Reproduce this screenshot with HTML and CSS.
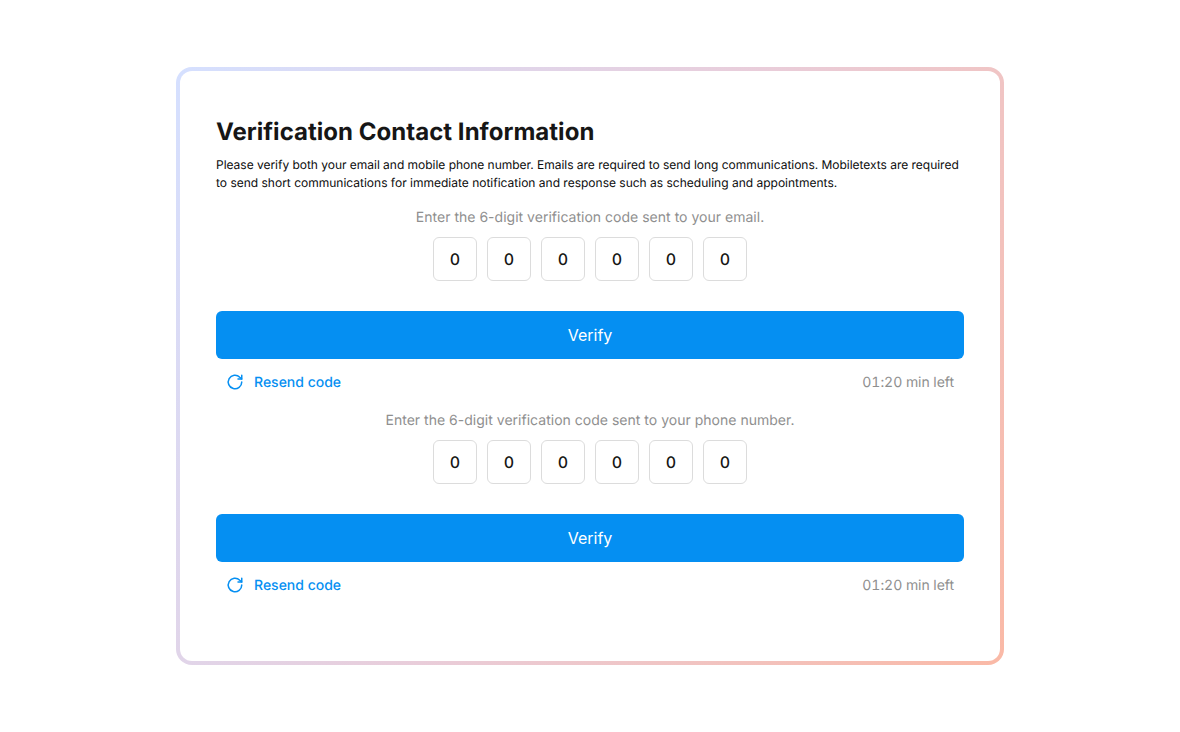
FILE: index.html
```html
<!DOCTYPE html>
<html lang="en">
<head>
<meta charset="utf-8">
<title>Verification Contact Information</title>
<link rel="stylesheet" href="styles.css">
</head>
<body>
<main class="card">
  <h1 class="title">Verification Contact Information</h1>
  <p class="intro">Please verify both your email and mobile phone number. Emails are required to send long communications. Mobiletexts are required to send short communications for immediate notification and response such as scheduling and appointments.</p>
  <section class="block">
    <p class="label">Enter the 6-digit verification code sent to your email.</p>
    <div class="digits"><span class="digit">0</span><span class="digit">0</span><span class="digit">0</span><span class="digit">0</span><span class="digit">0</span><span class="digit">0</span></div>
    <button class="verify" type="button">Verify</button>
    <div class="meta">
      <a class="resend" href="#"><svg class="icon" viewBox="0 0 24 24" fill="none" stroke="currentColor" stroke-linecap="round" stroke-linejoin="round"><path d="M21 12a9 9 0 1 1-2.64-6.36L21 8"/><path d="M21 3v5h-5"/></svg>Resend code</a>
      <span class="timer">01:20 min left</span>
    </div>
  </section>
  <section class="block">
    <p class="label">Enter the 6-digit verification code sent to your phone number.</p>
    <div class="digits"><span class="digit">0</span><span class="digit">0</span><span class="digit">0</span><span class="digit">0</span><span class="digit">0</span><span class="digit">0</span></div>
    <button class="verify" type="button">Verify</button>
    <div class="meta">
      <a class="resend" href="#"><svg class="icon" viewBox="0 0 24 24" fill="none" stroke="currentColor" stroke-linecap="round" stroke-linejoin="round"><path d="M21 12a9 9 0 1 1-2.64-6.36L21 8"/><path d="M21 3v5h-5"/></svg>Resend code</a>
      <span class="timer">01:20 min left</span>
    </div>
  </section>
</main>
</body>
</html>
```
FILE: styles.css
```css
* { box-sizing: border-box; }
html, body { height: 100%; }
body {
  margin: 0;
  background: #fff;
  font-family: Inter, "Liberation Sans", sans-serif;
  font-optical-sizing: none;
  text-rendering: geometricPrecision;
  display: flex;
  align-items: center;
  justify-content: center;
}
.card {
  width: 828px;
  height: 598px;
  padding: 45px 36px 0;
  border: 4px solid transparent;
  border-radius: 16px;
  background:
    linear-gradient(#fff, #fff) padding-box,
    linear-gradient(120deg, #d5e0ff 0%, #e9cdda 50%, #fab9a6 100%) border-box;
}
.title {
  margin: 0 0 8px;
  font-size: 24px;
  line-height: 32px;
  font-weight: 700;
  letter-spacing: 0.03px;
  color: #161616;
}
.intro {
  margin: 0;
  font-size: 12px;
  line-height: 18px;
  color: #0c0c0c;
}
.intro::first-line { letter-spacing: -0.025px; }
.block {
  display: flex;
  flex-direction: column;
  align-items: center;
  padding-top: 16px;
}
.block + .block { padding-top: 17px; }
.label {
  margin: 0 0 9px;
  font-size: 14px;
  line-height: 20px;
  letter-spacing: 0.015px;
  color: #8f8f8f;
}
.digits {
  display: flex;
  gap: 10px;
  margin-bottom: 30px;
}
.digit {
  width: 44px;
  height: 44px;
  display: flex;
  align-items: center;
  justify-content: center;
  border: 1px solid #dcdcdc;
  border-radius: 6px;
  font-size: 16px;
  font-weight: 500;
  font-variant-numeric: tabular-nums;
  color: #161616;
}
.verify {
  width: 100%;
  height: 48px;
  border: 0;
  border-radius: 6px;
  background: #058ff2;
  color: #fff;
  font: 400 16px Inter, "Liberation Sans", sans-serif;
}
.meta {
  width: 100%;
  height: 24px;
  margin-top: 11px;
  padding: 0 10px;
  display: flex;
  align-items: center;
  justify-content: space-between;
  font-size: 14px;
}
.resend {
  display: flex;
  align-items: center;
  gap: 10px;
  font-weight: 500;
  color: #058ff2;
  text-decoration: none;
}
.icon { width: 18px; height: 18px; stroke-width: 2; }
.timer {
  font-variant-numeric: tabular-nums;
  letter-spacing: -0.05px;
  color: #8f8f8f;
}
```
